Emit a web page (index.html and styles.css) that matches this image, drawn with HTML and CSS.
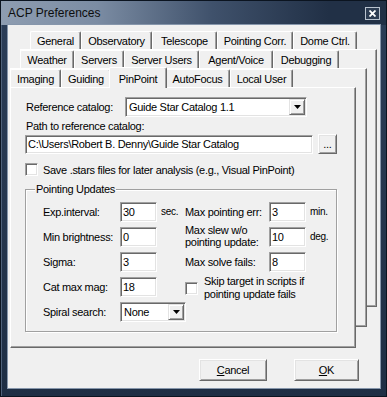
FILE: index.html
```html
<!DOCTYPE html>
<html lang="en">
<head>
  <meta charset="UTF-8" />
  <title>ACP Preferences</title>
  <link rel="stylesheet" href="styles.css">
</head>
<body>
  <div class="window">
    <div class="titlebar">
      <span class="title">ACP Preferences</span>
      <span class="close-btn">
        <svg width="7" height="7" viewBox="0 0 7 7"><path d="M0.5 0.5 L6.5 6.5 M6.5 0.5 L0.5 6.5" stroke="#fff" stroke-width="1.8"/></svg>
      </span>
    </div>

    <div class="client">
      <div class="tabstack">
        <div class="tabrow row1">
          <div class="tab">General</div>
          <div class="tab">Observatory</div>
          <div class="tab">Telescope</div>
          <div class="tab">Pointing Corr.</div>
          <div class="tab">Dome Ctrl.</div>
        </div>

        <div class="card card1">
          <div class="tabrow row2">
            <div class="tab">Weather</div>
            <div class="tab">Servers</div>
            <div class="tab">Server Users</div>
            <div class="tab">Agent/Voice</div>
            <div class="tab">Debugging</div>
          </div>

          <div class="card card2">
            <div class="tabrow row3">
              <div class="tab">Imaging</div>
              <div class="tab">Guiding</div>
              <div class="tab active">PinPoint</div>
              <div class="tab">AutoFocus</div>
              <div class="tab">Local User</div>
            </div>

            <!-- PinPoint page -->
            <div class="card card3 page">
              <div class="catalog-row">
                <span class="catalog-label">Reference catalog:</span>
                <div class="combo combo-catalog">
                  <span class="combo-text">Guide Star Catalog 1.1</span>
                  <span class="combo-btn"><svg width="7" height="4" viewBox="0 0 7 4"><path d="M0 0 H7 L3.5 4 Z" fill="#000"/></svg></span>
                </div>
              </div>

              <div class="path-label">Path to reference catalog:</div>
              <div class="path-row">
                <div class="textbox path-box">C:\Users\Robert B. Denny\Guide Star Catalog</div>
                <button class="btn btn-browse">...</button>
              </div>

              <div class="check-row">
                <span class="checkbox"></span>
                <span>Save .stars files for later analysis (e.g., Visual PinPoint)</span>
              </div>

              <fieldset class="group">
                <legend>Pointing Updates</legend>
                <div class="group-grid">
                  <span class="lbl">Exp.interval:</span>
                  <div class="textbox num">30</div>
                  <span class="unit">sec.</span>
                  <span class="lbl">Max pointing err:</span>
                  <div class="textbox num">3</div>
                  <span class="unit">min.</span>

                  <span class="lbl">Min brightness:</span>
                  <div class="textbox num">0</div>
                  <span></span>
                  <span class="lbl two-line">Max slew w/o<br>pointing update:</span>
                  <div class="textbox num">10</div>
                  <span class="unit">deg.</span>

                  <span class="lbl">Sigma:</span>
                  <div class="textbox num">3</div>
                  <span></span>
                  <span class="lbl">Max solve fails:</span>
                  <div class="textbox num">8</div>
                  <span></span>

                  <span class="lbl">Cat max mag:</span>
                  <div class="textbox num">18</div>
                  <span></span>
                  <div class="skip">
                    <span class="checkbox"></span>
                    <span class="skip-text">Skip target in scripts if<br>pointing update fails</span>
                  </div>

                  <span class="lbl">Spiral search:</span>
                  <div class="combo combo-spiral">
                    <span class="combo-text">None</span>
                    <span class="combo-btn"><svg width="7" height="4" viewBox="0 0 7 4"><path d="M0 0 H7 L3.5 4 Z" fill="#000"/></svg></span>
                  </div>
                </div>
              </fieldset>
            </div>
          </div>
        </div>
      </div>

      <div class="buttons">
        <button class="btn btn-cancel"><u>C</u>ancel</button>
        <button class="btn btn-ok"><u>O</u>K</button>
      </div>
    </div>
  </div>
</body>
</html>
```

FILE: styles.css
```css
body {
  margin: 0;
  background: #1a283c;
  font-family: "Liberation Sans", Arial, sans-serif;
  font-size: 11px;
  letter-spacing: -0.3px;
  color: #000;
}

/* Window frame */
.window {
  width: 387px;
  height: 397px;
  box-sizing: border-box;
  background: linear-gradient(to bottom, #2c3e58, #1e2e44);
  border: 1px solid #0b1420;
  box-shadow: inset 1px 1px 0 #4f617a;
}

.titlebar {
  height: 24px;
  display: flex;
  align-items: center;
  justify-content: space-between;
  padding: 0 6px 0 7px;
  background: linear-gradient(to right, #8e9db1 0%, #7b8ca3 25%, #3f516b 55%, #213046 85%);
}

.title {
  font-size: 12px;
  letter-spacing: 0;
  color: #0d0d0d;
}

.close-btn {
  width: 15px;
  height: 13px;
  box-sizing: border-box;
  display: flex;
  align-items: center;
  justify-content: center;
  border: 1px solid #b9c3cf;
  background: #2d3d53;
}

.client {
  margin: 0 6px 0 7px;
  height: 363px;
  background: #f0f0f0;
  box-shadow: 0 0 0 1px #8696ab;
}

/* Stacked tab pages */
.tabstack {
  height: 323px;
  box-sizing: border-box;
  padding-top: 6px;
}

.tabrow {
  display: grid;
  height: 18px;
}

.row1 {
  grid-template-columns: 51px 71px 65px 76px 64px;
  margin-left: 22px;
}

.row2 {
  grid-template-columns: 54px 50px 75px 74px 66px;
  margin-left: -1px;
}

.row3 {
  grid-template-columns: 51px 50px 54px 65px 63px;
  margin-left: -1px;
}

.tab {
  display: flex;
  align-items: center;
  justify-content: center;
  background: #f0f0f0;
  border: 1px solid;
  border-color: #fff #696969 transparent #fff;
  border-bottom: none;
  border-radius: 2px 2px 0 0;
  box-shadow: inset -1px 0 0 #a0a0a0;
  white-space: nowrap;
}

.tab.active {
  margin: -2px -2px -1px;
  padding-top: 1px;
  z-index: 1;
}

.card {
  box-sizing: border-box;
  background: #f0f0f0;
  border: 1px solid;
  border-color: #fff #696969 #696969 #fff;
  box-shadow: inset -1px -1px 0 #a0a0a0;
}

.card1 {
  margin-left: 12px;
  width: 357px;
  height: 258px;
}

.card2 {
  margin-left: -11px;
  width: 357px;
  height: 259px;
}

.card3 {
  margin-left: -1px;
  width: 346px;
  height: 261px;
}

.page {
  padding: 9px 0 0 14px;
}

/* Controls */
.textbox {
  box-sizing: border-box;
  height: 20px;
  padding: 0 2px;
  line-height: 18px;
  background: #fff;
  border: 1px solid;
  border-color: #a0a0a0 #fff #fff #a0a0a0;
  box-shadow: inset 1px 1px 0 #696969, inset -1px -1px 0 #e3e3e3;
  white-space: nowrap;
  overflow: hidden;
}

.combo {
  box-sizing: border-box;
  height: 20px;
  display: flex;
  background: #fff;
  border: 1px solid;
  border-color: #a0a0a0 #fff #fff #a0a0a0;
  box-shadow: inset 1px 1px 0 #696969, inset -1px -1px 0 #e3e3e3;
  padding: 1px;
}

.combo-text {
  flex: 1;
  padding-left: 2px;
  line-height: 16px;
  white-space: nowrap;
}

.combo-btn {
  width: 16px;
  box-sizing: border-box;
  display: flex;
  align-items: center;
  justify-content: center;
  background: #f0f0f0;
  border: 1px solid;
  border-color: #e3e3e3 #696969 #696969 #e3e3e3;
  box-shadow: inset 1px 1px 0 #fff, inset -1px -1px 0 #a0a0a0;
}

.checkbox {
  width: 13px;
  height: 13px;
  box-sizing: border-box;
  flex: none;
  background: #fff;
  border: 1px solid;
  border-color: #a0a0a0 #fff #fff #a0a0a0;
  box-shadow: inset 1px 1px 0 #696969, inset -1px -1px 0 #e3e3e3;
}

.btn {
  box-sizing: border-box;
  height: 22px;
  padding: 0;
  font: inherit;
  letter-spacing: inherit;
  color: #000;
  background: #f0f0f0;
  border: 1px solid;
  border-color: #fff #696969 #696969 #fff;
  box-shadow: inset 1px 1px 0 #e3e3e3, inset -1px -1px 0 #a0a0a0;
}

/* Page rows */
.catalog-row {
  display: flex;
  align-items: center;
}

.catalog-label {
  width: 100px;
  padding-left: 1px;
  box-sizing: border-box;
}

.combo-catalog {
  width: 182px;
}

.path-label {
  margin-top: 3px;
  padding-left: 1px;
  line-height: 13px;
}

.path-row {
  display: flex;
  align-items: flex-end;
  gap: 5px;
  margin-top: 1px;
}

.path-box {
  width: 288px;
  height: 19px;
  line-height: 17px;
}

.btn-browse {
  width: 19px;
  height: 20px;
  line-height: 14px;
}

.check-row {
  display: flex;
  align-items: center;
  gap: 5px;
  margin-top: 9px;
  height: 13px;
}

/* Pointing Updates group */
.group {
  width: 312px;
  box-sizing: border-box;
  margin: 7px 0 0;
  padding: 0 0 9px;
  min-width: 0;
  border: 1px solid #a0a0a0;
  box-shadow: 1px 1px 0 #fff, inset 1px 1px 0 #fff;
}

.group legend {
  margin-left: 9px;
  padding: 0 1px;
  line-height: 13px;
  background: #f0f0f0;
}

.group-grid {
  display: grid;
  grid-template-columns: 77px 37px 28px 84px 37px 1fr;
  grid-auto-rows: 20px;
  row-gap: 5px;
  margin: 6px 0 0 17px;
}

.lbl {
  line-height: 20px;
  white-space: nowrap;
}

.lbl.two-line {
  line-height: 12px;
  margin-top: -3px;
}

.unit {
  padding-left: 4px;
  font-size: 10px;
  line-height: 20px;
}

.skip {
  grid-column: 4 / 7;
  display: flex;
  align-items: flex-start;
  gap: 6px;
}

.skip .checkbox {
  margin-top: 5px;
}

.skip-text {
  line-height: 13px;
  margin-top: -2px;
}

.combo-spiral {
  grid-column: 2 / 4;
  width: 66px;
}

/* Dialog buttons */
.buttons {
  display: flex;
  justify-content: flex-end;
  gap: 27px;
  margin-top: 11px;
  padding-right: 21px;
}

.btn-cancel {
  width: 68px;
}

.btn-ok {
  width: 65px;
}
```
